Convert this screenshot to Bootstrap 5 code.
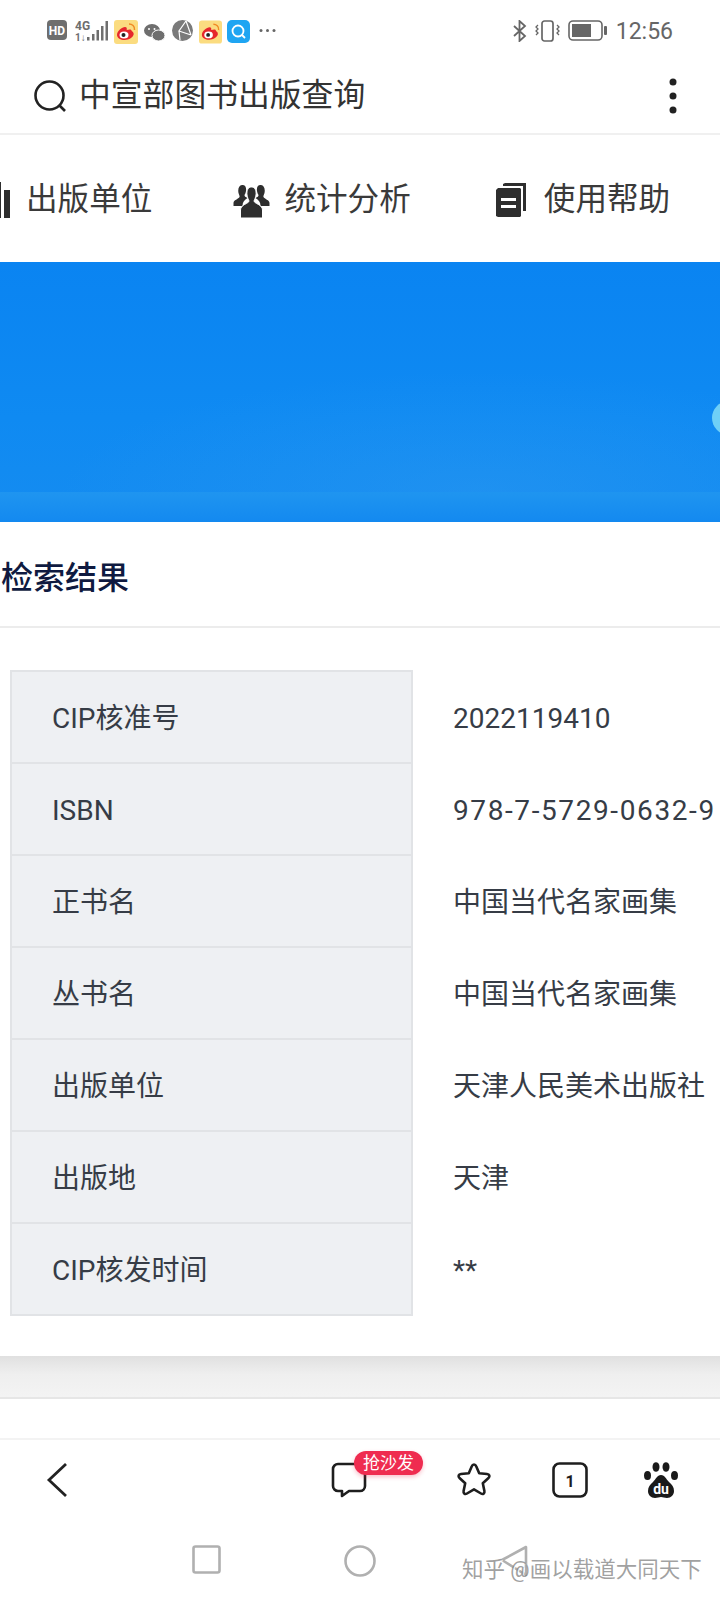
<!DOCTYPE html>
<html lang="zh-CN">
<head>
  <meta charset="UTF-8">
  <meta name="viewport" content="width=device-width, initial-scale=1.0">
  <title>中宣部图书出版查询</title>
  <link rel="stylesheet" href="https://cdn.jsdelivr.net/npm/bootstrap@5.3.0/dist/css/bootstrap.min.css">
  <style>
    body { width: 720px; height: 1599px; overflow: hidden; position: relative; background: #fff; font-family: Roboto, "Noto Sans CJK SC", sans-serif; color: #333; }
    svg { display: block; flex: none; }
    .statusBar { height: 62px; padding: 20px 47px 0 47px; }
    .statusTime { font-size: 23px; line-height: 24px; color: #666; margin-left: 9px; }
    .appHeader { height: 73px; padding: 0 43px 3px 34px; border-bottom: 2px solid #f0f0f0; }
    .appTitle { font-size: 31.8px; line-height: 1; color: #333; margin-left: 12px; white-space: nowrap; }
    .menuRow { height: 127px; overflow: hidden; padding-top: 2px; }
    .menuText { font-size: 31.6px; line-height: 1; color: #3a3a3a; white-space: nowrap; }
    .heroBox { height: 260px; position: relative; overflow: hidden; background: radial-gradient(ellipse 420px 120px at 480px 230px, rgba(42, 151, 240, .5) 0%, rgba(42, 151, 240, 0) 100%), linear-gradient(180deg, #0a84f2 0%, #0f8af2 60%, #158cf0 100%); }
    .heroBand { position: absolute; left: 0; right: 0; bottom: 0; height: 30px; background: linear-gradient(180deg, #1f95f0 0%, #1389f0 100%); }
    .heroDot { position: absolute; left: 712px; top: 139px; width: 34px; height: 34px; border-radius: 50%; background: #6fd0f7; }
    .resultTitle { height: 106px; padding: 8px 0 0 1px; border-bottom: 2px solid #ececec; font-size: 32px; font-weight: 500; color: #0f1a40; }
    .resultArea { height: 728px; padding: 42px 0 0 10px; }
    .infoTable { width: 710px; table-layout: fixed; margin: 0; }
    .infoTable th, .infoTable td { height: 92px; padding: 3px 0 0; vertical-align: middle; font-size: 28px; font-weight: 400; color: #363c46; white-space: nowrap; }
    .infoTable td { padding-left: 40px; border: 0; }
    .infoTable th { --bs-table-bg: #eef0f3; padding-left: 40px; border: 2px solid #e1e3e6; border-width: 0 2px 2px 2px; }
    .infoTable tr:first-child th { border-top-width: 2px; }
    .labelCol { width: 401px; }
    .isbnText { letter-spacing: 1.6px; }
    .greyBand { height: 43px; background: linear-gradient(180deg, #e0e0e0 0%, #efefef 45%, #f3f3f3 100%); border-bottom: 2px solid #e6e6e6; }
    .blankRow { height: 41px; border-bottom: 2px solid #f3f3f3; }
    .toolBar { height: 96px; padding: 22px 0 0 46px; position: relative; }
    .commentBadge { position: absolute; left: 354px; top: 11px; width: 69px; height: 24px; border-radius: 12px; background: #ef2c50; color: #fff; font-size: 17px; line-height: 24px; text-align: center; box-shadow: 0 2px 4px rgba(239, 44, 80, .3); }
    .sysNav { height: 63px; padding-top: 9px; }
    .waterMark { position: absolute; left: 462px; top: 1557px; font-size: 21.5px; line-height: 26px; color: rgba(130, 130, 130, .75); text-shadow: 1px 1px 0 rgba(255, 255, 255, .9); white-space: nowrap; }
  </style>
</head>
<body>
  <!-- status bar -->
  <div class="statusBar d-flex align-items-start">
    <svg width="20" height="20" viewBox="0 0 20 20"><rect width="20" height="20" rx="4" fill="#6e6e6e"/><text x="10" y="14.500" text-anchor="middle" font-size="12" font-weight="700" font-family="Roboto" fill="#fff">HD</text></svg>
    <svg class="ms-2" width="34" height="22" viewBox="0 0 34 22"><text x="0" y="10" font-size="12" font-weight="700" font-family="Roboto" fill="#6e6e6e">4G</text><text x="0" y="21" font-size="10" font-weight="700" font-family="Roboto" fill="#6e6e6e">1↓</text><path d="M12 17h2.500v3.500H12zM17 14h2.500v6.500H17zM21.500 10H24v10.500h-2.500zM26 6h2.500v14.500H26zM30.500 1H33v19.500h-2.500z" fill="#6e6e6e"/></svg>
    <svg style="margin-left:5px" width="24" height="24" viewBox="0 0 24 24"><rect width="24" height="24" rx="3" fill="#fbdc80"/><path d="M3 15c0-4 5-8 8-8 2 0 2 1.500 1.700 3 3-1 5-.8 5 1 0 .5 2 .8 2 3 0 3-5 6-9 6s-7.700-2-7.700-5z" fill="#e6262c"/><ellipse cx="10" cy="15" rx="4.500" ry="3.500" fill="#fff"/><circle cx="9.500" cy="15" r="2" fill="#222"/><path d="M15 4c3 0 6 2 5.500 6" fill="none" stroke="#f08a24" stroke-width="1.500"/></svg>
    <svg style="margin-left:6px" width="21" height="18" viewBox="0 0 21 18" class="mt-1"><ellipse cx="8" cy="6.500" rx="8" ry="6.500" fill="#6e6e6e"/><ellipse cx="14.500" cy="11.500" rx="6.500" ry="5.500" fill="#6e6e6e" stroke="#fff"/><circle cx="5" cy="5" r="1" fill="#fff"/><circle cx="10.500" cy="5" r="1" fill="#fff"/></svg>
    <svg style="margin-left:7px" width="21" height="21" viewBox="0 0 21 21"><circle cx="10.500" cy="10.500" r="10.500" fill="#7a7a7a"/><path d="M14 1 7 11l12 4M7 11l1 9M14 1l5 14" fill="none" stroke="#fff" stroke-width="1.200"/></svg>
    <svg style="margin-left:6px" width="23" height="24" viewBox="0 0 24 24"><rect width="24" height="24" rx="3" fill="#fbdc80"/><path d="M3 15c0-4 5-8 8-8 2 0 2 1.500 1.700 3 3-1 5-.8 5 1 0 .5 2 .8 2 3 0 3-5 6-9 6s-7.700-2-7.700-5z" fill="#e6262c"/><ellipse cx="10" cy="15" rx="4.500" ry="3.500" fill="#fff"/><circle cx="9.500" cy="15" r="2" fill="#222"/><path d="M15 4c3 0 6 2 5.500 6" fill="none" stroke="#f08a24" stroke-width="1.500"/></svg>
    <svg style="margin-left:5px" width="23" height="23" viewBox="0 0 23 23"><rect width="23" height="23" rx="5" fill="#1fa5f2"/><circle cx="11" cy="11" r="5.500" fill="none" stroke="#fff" stroke-width="1.800"/><path d="m15 15 3 3" stroke="#fff" stroke-width="1.800"/></svg>
    <svg style="margin-left:9px" width="17" height="23" viewBox="0 0 17 23"><circle cx="2" cy="10.500" r="1.500" fill="#666"/><circle cx="8.500" cy="10.500" r="1.500" fill="#666"/><circle cx="15" cy="10.500" r="1.500" fill="#666"/></svg>
    <svg class="ms-auto" width="16" height="22" viewBox="0 0 16 22"><path d="m2 6 11 10-5.500 5V1L13 6 2 16" fill="none" stroke="#666" stroke-width="1.800"/></svg>
    <svg style="margin-left:7px" width="25" height="22" viewBox="0 0 25 22"><rect x="7" y="1" width="11" height="20" rx="2.500" fill="none" stroke="#666" stroke-width="1.700"/><path d="M3 5 1 7l2 2-2 2 2 2-2 2M22 5l2 2-2 2 2 2-2 2 2 2" fill="none" stroke="#666" stroke-width="1.300"/></svg>
    <svg style="margin-left:8px" width="39" height="21" viewBox="0 0 39 21"><rect x="1" y="1" width="33" height="19" rx="4" fill="none" stroke="#666" stroke-width="1.600"/><rect x="4" y="4" width="19" height="13" fill="#666"/><rect x="36" y="6" width="3" height="9" rx="1" fill="#666"/></svg>
    <span class="statusTime">12:56</span>
  </div>

  <!-- page header -->
  <div class="appHeader d-flex align-items-center">
    <svg width="33" height="33" viewBox="0 0 33 33"><circle cx="15.500" cy="15.500" r="14" fill="none" stroke="#222" stroke-width="2.600"/><path d="m25 25 6 6" stroke="#222" stroke-width="2.600"/></svg>
    <span class="appTitle">中宣部图书出版查询</span>
    <svg class="ms-auto" width="8" height="36" viewBox="0 0 8 36"><circle cx="4" cy="4" r="3.500" fill="#222"/><circle cx="4" cy="18" r="3.500" fill="#222"/><circle cx="4" cy="32" r="3.500" fill="#222"/></svg>
  </div>

  <!-- menu, scrolled so that the first icon is cut off -->
  <div class="menuRow d-flex align-items-center">
    <svg style="margin-left:-10px" width="20" height="36" viewBox="0 0 20 36"><path d="M0 0h11v36H0zM14 8h6v28h-6z" fill="#2e2e2e"/></svg>
    <span class="menuText" style="margin-left:16px">出版单位</span>
    <svg style="margin-left:81px" width="37" height="36" viewBox="0 0 36 36"><path d="M9 3c3 0 4 3 3.500 6-.3 2-1 3-1.500 4 0 1.500 1 2 3 3-3 2-5 4-5 8H0v-3c0-3 5-4 6-6 .4-1-.5-2-1-4C4 6 6 3 9 3zM27 3c3 0 5 3 4 8-.5 2-1.400 3-1 4 1 2 6 3 6 6v3h-9c0-4-2-6-5-8 2-1 3-1.500 3-3-.5-1-1.200-2-1.500-4C23 6 24 3 27 3z" fill="#2e2e2e"/><path d="M18 5c3.500 0 5 3.500 4.500 8-.3 2.500-1.500 4.500-2 6 0 2.500 8.500 3.500 8.500 9V36H7v-8c0-5.500 8.500-6.500 8.500-9-.5-1.500-1.700-3.500-2-6C13 8.500 14.500 5 18 5z" fill="#2e2e2e" stroke="#fff" stroke-width="1"/></svg>
    <span class="menuText" style="margin-left:14px">统计分析</span>
    <svg style="margin-left:85px" width="30" height="35" viewBox="0 0 30 35"><path d="M7 4V2l2-1h21v28h-3V4z" fill="#2e2e2e"/><path d="M2 6h22l1 1v27l-1 1H2l-2-1V8z" fill="#2e2e2e"/><path d="M5 16h15v3H5zM5 23h15v3H5z" fill="#fff"/></svg>
    <span class="menuText" style="margin-left:18px">使用帮助</span>
  </div>

  <!-- banner -->
  <div class="heroBox">
    <div class="heroBand"></div>
    <div class="heroDot"></div>
  </div>

  <div class="resultTitle d-flex align-items-center">检索结果</div>

  <div class="resultArea">
    <table class="table infoTable">
      <colgroup><col class="labelCol"><col></colgroup>
      <tbody>
        <tr><th>CIP核准号</th><td>2022119410</td></tr>
        <tr><th>ISBN</th><td class="isbnText">978-7-5729-0632-9</td></tr>
        <tr><th>正书名</th><td>中国当代名家画集</td></tr>
        <tr><th>丛书名</th><td>中国当代名家画集</td></tr>
        <tr><th>出版单位</th><td>天津人民美术出版社</td></tr>
        <tr><th>出版地</th><td>天津</td></tr>
        <tr><th>CIP核发时间</th><td>**</td></tr>
      </tbody>
    </table>
  </div>

  <div class="greyBand"></div>
  <div class="blankRow"></div>

  <!-- browser toolbar -->
  <div class="toolBar d-flex align-items-start">
    <svg width="22" height="36" viewBox="0 0 22 36"><path d="M20 2 3 18l17 16" fill="none" stroke="#222" stroke-width="2.800"/></svg>
    <svg style="margin-left:263px" width="36" height="36" viewBox="0 0 36 36"><path d="M7 2h22a5 5 0 0 1 5 5v17a5 5 0 0 1-5 5H18l-7 5v-5H7a5 5 0 0 1-5-5V7a5 5 0 0 1 5-5z" fill="none" stroke="#1e1e1e" stroke-width="2.600" stroke-linejoin="round"/></svg>
    <svg style="margin-left:88px" width="38" height="36" viewBox="0 0 38 36"><path d="M19 2.500c1 0 1.800.7 2.200 1.700l3 7 7.800.8c2.500.3 3.200 2.500 1.500 4l-5.700 5.300 1.600 7.700c.5 2.400-1.400 3.700-3.400 2.500L19 27.400l-7 4.100c-2 1.200-3.900-.1-3.400-2.500l1.600-7.700-5.700-5.300c-1.700-1.500-1-3.700 1.500-4l7.800-.8 3-7c.4-1 1.200-1.700 2.200-1.700z" fill="none" stroke="#1e1e1e" stroke-width="2.600" stroke-linejoin="round"/></svg>
    <svg style="margin-left:59px" width="36" height="36" viewBox="0 0 36 36"><rect x="1.500" y="1.500" width="33" height="33" rx="6" fill="none" stroke="#1e1e1e" stroke-width="2.600"/><text x="18" y="24.500" text-anchor="middle" font-size="16" font-weight="700" font-family="Roboto" fill="#1e1e1e">1</text></svg>
    <svg style="margin-left:56px" width="34" height="36" viewBox="0 0 34 36"><ellipse cx="3.500" cy="13.500" rx="3.500" ry="4.500" fill="#1a1a1a"/><ellipse cx="12" cy="5" rx="3.500" ry="4.800" fill="#1a1a1a"/><ellipse cx="22" cy="5" rx="3.500" ry="4.800" fill="#1a1a1a"/><ellipse cx="30.500" cy="13.500" rx="3.500" ry="4.500" fill="#1a1a1a"/><path d="M17 13c4 0 5 4 8 7 3 2.500 5 5 5 9 0 4-3 7-7 7-2.500 0-4-1-6-1s-3.500 1-6 1c-4 0-7-3-7-7 0-4 2-6.500 5-9 3-3 4-7 8-7z" fill="#1a1a1a"/><text x="17" y="32" text-anchor="middle" font-size="14" font-weight="700" font-family="Roboto" fill="#fff">du</text></svg>
    <span class="commentBadge">抢沙发</span>
  </div>

  <!-- system navigation -->
  <div class="sysNav d-flex align-items-start">
    <svg style="margin-left:192px" width="29" height="29" viewBox="0 0 29 29"><rect x="1.500" y="1.500" width="26" height="26" rx="2" fill="none" stroke="#b0b0b0" stroke-width="2.600"/></svg>
    <svg style="margin-left:123px" width="32" height="32" viewBox="0 0 32 32"><circle cx="16" cy="16" r="14.500" fill="none" stroke="#b0b0b0" stroke-width="2.600"/></svg>
    <svg style="margin-left:123px" width="30" height="32" viewBox="0 0 30 32"><path d="M27 2v28L3 15z" fill="none" stroke="#b0b0b0" stroke-width="2.600" stroke-linejoin="round"/></svg>
  </div>

  <div class="waterMark">知乎 @画以载道大同天下</div>

  <script src="https://cdn.jsdelivr.net/npm/bootstrap@5.3.0/dist/js/bootstrap.bundle.min.js"></script>
</body>
</html>
